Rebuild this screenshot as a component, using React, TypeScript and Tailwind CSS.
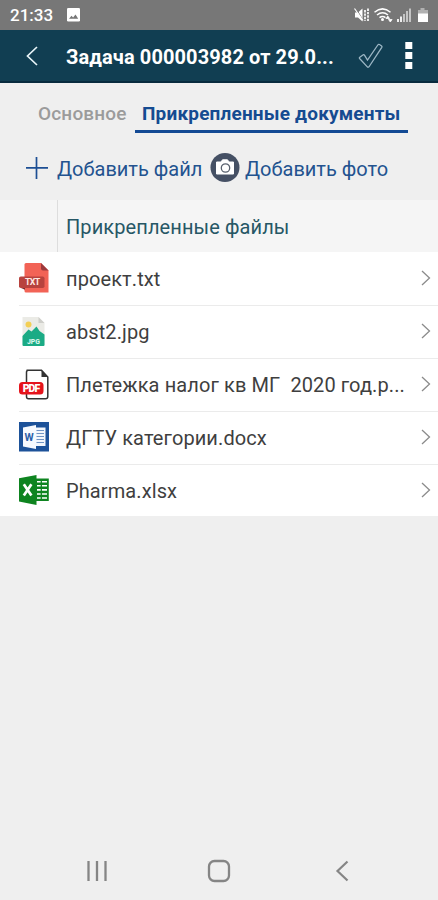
import type { ReactNode } from "react";

type FileItem = {
  name: string;
  icon: ReactNode;
};

function TxtIcon() {
  return (
    <svg width="30" height="30" viewBox="0 0 30 30" className="shrink-0">
      <path d="M5.500 1.500Q5.500 0 7 0H22l7.500 7.500V29.500H7Q5.500 29.500 5.500 28Z" fill="#f26356" />
      <path d="M22 0l7.500 7.500H24Q22 7.500 22 5.500Z" fill="#9c3a3c" />
      <rect x="0" y="13.500" width="25.500" height="11.500" rx="1.800" fill="#b8433e" />
      <path d="M2 25h4v1.800Z" fill="#7d2d2d" />
      <text x="13.200" y="22.400" textAnchor="middle" fontSize="8.800" fontWeight="700" letterSpacing="-.7" fill="#ffe9e4" fontFamily="Roboto, sans-serif">TXT</text>
    </svg>
  );
}

function JpgIcon() {
  return (
    <svg width="30" height="30" viewBox="0 0 30 30" className="shrink-0">
      <path d="M3.500 1H19.500l6 6V29H3.500Z" fill="#ebebe6" />
      <path d="M19.500 1l6 6H19.500Z" fill="#cfcfca" />
      <circle cx="9.500" cy="8.500" r="3" fill="#f3cf55" />
      <path d="M3.500 20l6-6.500 3 2 5-5 3 4.500 5 3.500V29Q25.500 30 24.500 30H4.500Q3.500 30 3.500 29Z" fill="#1bab85" />
      <text x="14.500" y="28" textAnchor="middle" fontSize="6.800" fontWeight="900" fill="#d8f5eb" fontFamily="Roboto, sans-serif">JPG</text>
    </svg>
  );
}

function PdfIcon() {
  return (
    <svg width="30" height="31" viewBox="0 0 30 31" className="shrink-0">
      <path d="M7.500 1.200H22.500L28.800 8V27.500Q28.800 29.800 26.500 29.800H9.500Q7.500 29.800 7.500 27.500V3.200Q7.500 1.200 9.500 1.200Z" fill="#fff" stroke="#333" strokeWidth="1.500" />
      <path d="M22.500 1l6.500 7H22.500Z" fill="#333" />
      <rect x="0" y="13" width="24.500" height="12.500" rx="3.500" fill="#e5131b" />
      <text x="12" y="22.900" textAnchor="middle" fontSize="10.500" fontWeight="900" letterSpacing="-.9" fill="#fff" fontFamily="Roboto, sans-serif">PDF</text>
    </svg>
  );
}

function WordIcon() {
  return (
    <svg width="30" height="30" viewBox="0 0 30 30" className="shrink-0">
      <rect width="30" height="29.500" fill="#1d5299" />
      <path d="M17 5.500h9.500v18.500H17Z" fill="#f3f7fc" />
      <path d="M17.500 8.500h7.500M17.500 11.500h7.500M17.500 14.500h7.500M17.500 17.500h7.500M17.500 20.500h7.500" stroke="#6f94c5" strokeWidth="1.200" />
      <path d="M4 5.500L17 3v24L4 24.500Z" fill="#f7fafe" />
      <text x="10.200" y="18.600" textAnchor="middle" fontSize="10.500" fontWeight="700" fill="#2b5fa8" fontFamily="Roboto, sans-serif">W</text>
    </svg>
  );
}

function ExcelIcon() {
  return (
    <svg width="30" height="30" viewBox="0 0 30 30" className="shrink-0">
      <path d="M17 3.500h12.800v22.500H17Z" fill="#0e8420" />
      <path d="M18 6.700h10M18 10.800h10M18 14.900h10M18 19h10M18 23h10" stroke="#fff" strokeWidth="1.600" />
      <path d="M22.300 5v19" stroke="#0e8420" strokeWidth="1.300" />
      <path d="M0 3.300L17.500 0v30L0 26.500Z" fill="#0e8420" />
      <path d="M4.800 9.200L12.400 20.600M12.400 9.200L4.800 20.600" stroke="#fff" strokeWidth="2.700" />
    </svg>
  );
}

const files: FileItem[] = [
  { name: "проект.txt", icon: <TxtIcon /> },
  { name: "abst2.jpg", icon: <JpgIcon /> },
  { name: "Плетежка налог кв МГ  2020 год.p...", icon: <PdfIcon /> },
  { name: "ДГТУ категории.docx", icon: <WordIcon /> },
  { name: "Pharma.xlsx", icon: <ExcelIcon /> },
];

function StatusBar() {
  return (
    <div className="flex h-[30px] items-center bg-[#777777] pl-[10px] pr-[8px] text-white">
      <span className="pt-[1px] text-[17px] font-medium leading-none">21:33</span>
      <svg width="14" height="14" viewBox="0 0 14 14" className="ml-[14px]">
        <rect width="13" height="13.500" rx="1.300" fill="#fff" />
        <path d="M2 10.800l2.500-3 1.600 1.800L8.500 6.500l2.700 4.300Z" fill="#777" />
      </svg>
      <svg width="77" height="18" viewBox="0 0 77 18" className="ml-auto">
        <path d="M2 6.500h3L9.500 2.500v13L5 11.500H2Z" fill="#fff" />
        <path d="M2.500 1.500l8 13.500" stroke="#777" strokeWidth="1" />
        <path d="M1.500 2.500l8.500 12" stroke="#fff" strokeWidth="1.200" />
        <path d="M12 4v11M15 2.500v13" stroke="#fff" strokeWidth="1.700" strokeDasharray="2.400 1" />
        <g fill="none" stroke="#fff" strokeWidth="1.500">
          <path d="M21.500 6.200Q29.500-.5 37.500 6.200" />
          <path d="M24 9Q29.500 4.500 35 9" />
          <path d="M26.500 11.600Q29.500 9.200 32.500 11.600" />
        </g>
        <circle cx="29.500" cy="13.500" r="1.500" fill="#fff" />
        <path d="M33 12.500l1.800-2.500 1.800 2.500Z M35.500 13.500l1.800 2.500 1.800-2.500Z" fill="#fff" stroke="#fff" strokeWidth=".8" />
        <path d="M45 13v3M48 10.500V16" stroke="#eee" strokeWidth="2" />
        <path d="M51 8v8M54 5v11M57 2.500V16" stroke="#c4c4c4" strokeWidth="2" />
        <path d="M67.500 2h4v2H75v12H65V4h2.500Z" fill="#b1b1b1" />
        <path d="M65 7.500h10V16H65Z" fill="#fff" />
      </svg>
    </div>
  );
}

function Header() {
  return (
    <header className="flex h-[53px] items-center border-b-2 border-[#082b3e] bg-[#113e52] text-white">
      <svg width="12" height="20" viewBox="0 0 12 20" fill="none" className="ml-[26px] shrink-0">
        <path d="M11 1L1.500 10 11 19" stroke="#e8f4f8" strokeWidth="1.700" />
      </svg>
      <h1 className="ml-[28px] w-[272px] whitespace-nowrap pt-[3px] text-[20px] font-bold leading-none tracking-[0.1px]">
        Задача 000003982 от 29.0...
      </h1>
      <svg width="26" height="26" viewBox="0 0 26 26" fill="none" className="ml-[20px] shrink-0">
        <path d="M1.800 14.200L5.200 11.800Q6 11.400 6.600 12.300L9.500 17 19.800 2Q20.500 1 21.500 1.500L23.600 2.900Q24.300 3.500 23.800 4.300L11.200 23.500Q10.300 24.900 9.100 23.600L1.600 15.500Q1 14.800 1.800 14.200Z" stroke="#9db7c5" strokeWidth="1.300" />
      </svg>
      <svg width="8" height="30" viewBox="0 0 8 30" fill="#fff" className="ml-[21px] shrink-0">
        <rect x=".3" y="1" width="7" height="7" />
        <rect x=".3" y="11" width="7" height="7" />
        <rect x=".3" y="21" width="7" height="7" />
      </svg>
    </header>
  );
}

function Tabs() {
  return (
    <nav className="flex h-[50px] items-stretch pl-[38px] text-[19px] leading-none tracking-[0.18px]">
      <div className="w-[97px] whitespace-nowrap pt-[21px] font-medium text-[#9b9b9b]">Основное</div>
      <div className="w-[273px] whitespace-nowrap border-b-[3px] border-[#134a94] pl-[7px] pt-[21px] font-bold text-[#154b91]">
        Прикрепленные документы
      </div>
    </nav>
  );
}

function Actions() {
  return (
    <div className="flex h-[67px] items-center pl-[26px] pt-[3px] text-[20px] leading-none text-[#23538f]">
      <svg width="22" height="22" viewBox="0 0 22 22" className="shrink-0">
        <path d="M10.500 0v22M0 10.800h22" stroke="#1d4f94" strokeWidth="1.700" />
      </svg>
      <span className="ml-[9px] w-[153px] whitespace-nowrap pt-[1px]">Добавить файл</span>
      <svg width="30" height="30" viewBox="0 0 30 30" className="shrink-0">
        <circle cx="15" cy="14.500" r="14.500" fill="#455064" />
        <path d="M6.500 9H11L12.500 6.800h5L19 9h4.500V21h-17Z" fill="#fff" stroke="#fff" strokeLinejoin="round" />
        <circle cx="15.500" cy="15" r="4.200" fill="#fff" stroke="#59616e" strokeWidth="1.300" />
      </svg>
      <span className="ml-[5px] whitespace-nowrap pt-[1px]">Добавить фото</span>
    </div>
  );
}

function FileRow({ file }: { file: FileItem }) {
  return (
    <li className="group flex h-[53px] pl-[19px] last:h-[52px]">
      <div className="flex flex-1 items-center border-t border-[#ebebeb] pb-[2px] group-first:border-transparent">
        {file.icon}
        <span className="ml-[17px] whitespace-pre pt-[2px] text-[20px] leading-none tracking-[0.1px] text-[#3f3f3f]">
          {file.name}
        </span>
        <svg width="10" height="16" viewBox="0 0 10 16" fill="none" className="ml-auto mr-[7px] shrink-0">
          <path d="M1 1l7.500 7L1 15" stroke="#8b8b8b" strokeWidth="1.300" />
        </svg>
      </div>
    </li>
  );
}

function NavigationBar() {
  return (
    <div className="mt-auto flex h-[58px] items-center pl-[86px] pr-[89px]">
      <svg width="22" height="22" viewBox="0 0 22 22" stroke="#858585" strokeWidth="2.300">
        <path d="M2.500 1v20M11 1v20M19.500 1v20" />
      </svg>
      <svg width="24" height="24" viewBox="0 0 24 24" fill="none" className="ml-[99px]">
        <rect x="2" y="2" width="20" height="20" rx="5.500" stroke="#858585" strokeWidth="2.300" />
      </svg>
      <svg width="14" height="22" viewBox="0 0 14 22" fill="none" className="ml-auto">
        <path d="M12.500 1.500L2.500 11l10 9.500" stroke="#858585" strokeWidth="2.200" />
      </svg>
    </div>
  );
}

export default function App() {
  return (
    <div className="flex h-[900px] w-[438px] flex-col overflow-hidden bg-[#efefef] font-['Roboto',sans-serif]">
      <StatusBar />
      <Header />
      <Tabs />
      <Actions />
      <div className="flex h-[52px] bg-[#f5f5f5]">
        <div className="w-[58px] border-r border-[#dddddd]" />
        <div className="flex items-center whitespace-nowrap pl-[8px] pt-[1px] text-[20px] tracking-[0.1px] text-[#265765]">
          Прикрепленные файлы
        </div>
      </div>
      <ul className="bg-white">
        {files.map((file) => (
          <FileRow key={file.name} file={file} />
        ))}
      </ul>
      <NavigationBar />
    </div>
  );
}
